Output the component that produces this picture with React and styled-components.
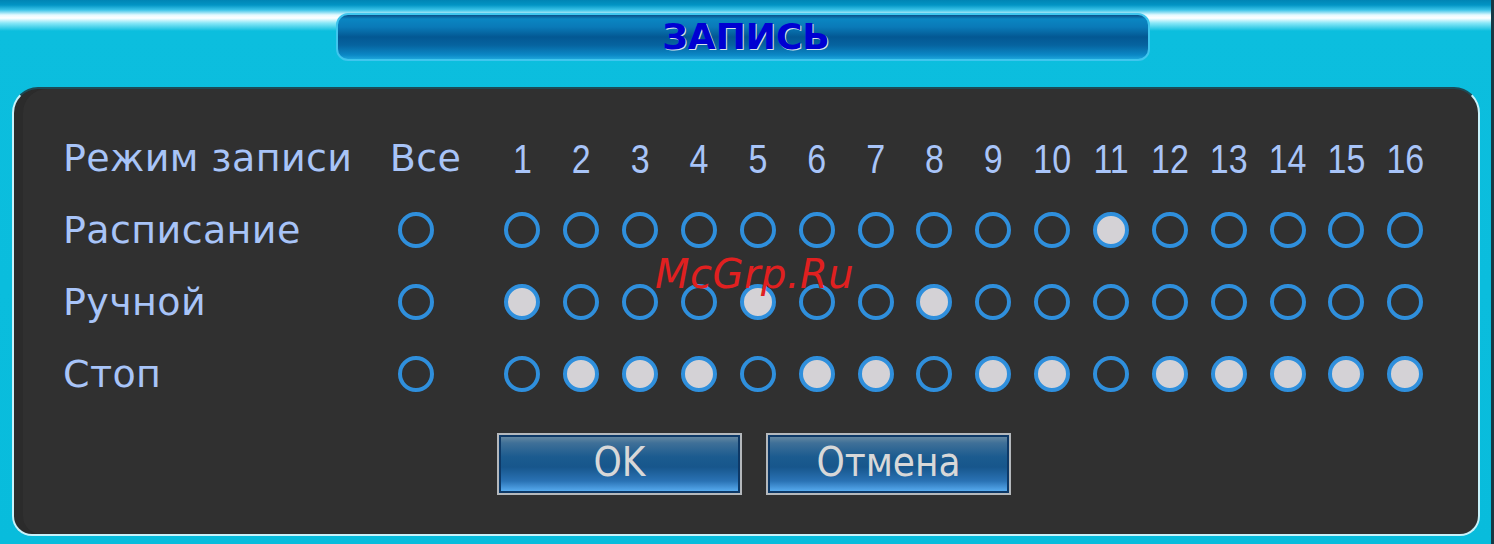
import styled, { createGlobalStyle } from "styled-components";

const Global = createGlobalStyle`
  html, body {
    margin: 0;
    padding: 0;
    background: #08bcdc;
  }
  * { box-sizing: border-box; }
`;

const Frame = styled.div`
  position: relative;
  width: 1494px;
  height: 544px;
  overflow: hidden;
  padding-top: 13px;
  background: linear-gradient(
    180deg,
    #0084b4 0px,
    #0294c4 5px,
    #3cc4e8 10px,
    #e4faff 15px,
    #ffffff 18px,
    #8ae8f8 23px,
    #0cbede 31px,
    #08bcdc 100%
  );
  box-shadow: inset -3px 0 0 #173844;
`;

const TitleBar = styled.div`
  width: 814px;
  height: 48px;
  margin-left: 336px;
  border-radius: 12px;
  border: 2px solid #3fc6ee;
  background: linear-gradient(
    180deg,
    #0b4f88 0px,
    #0a86c2 4px,
    #0a7ab8 12px,
    #035893 22px,
    #06639f 30px,
    #0b88c6 40px,
    #1ca4da 100%
  );
  display: flex;
  align-items: center;
  justify-content: center;
`;

const Title = styled.span`
  font-family: "DejaVu Sans", "Liberation Sans", sans-serif;
  font-weight: bold;
  font-size: 36px;
  color: #0000d2;
  text-shadow: 1px 1px 0 #d8e4ec;
  margin-top: -2px;
  padding-left: 6px;
`;

const Panel = styled.div`
  margin: 26px 0 0 12px;
  width: 1468px;
  height: 449px;
  background: #303030;
  border-radius: 26px 26px 20px 20px;
  border: 2px solid #c8f2fa;
  border-top: 2px solid #1d4a55;
  box-shadow: inset 9px 0 0 #2b2b2b;
  padding: 33px 0 0 49px;
`;

const Grid = styled.div`
  display: grid;
  grid-template-columns: 323px 59px 48px repeat(16, 58.87px);
  grid-auto-rows: 72px;
  align-items: center;
`;

const Label = styled.div`
  font-family: "DejaVu Sans", "Liberation Sans", sans-serif;
  font-size: 38px;
  color: #a8c4f8;
  white-space: nowrap;
  letter-spacing: 0.4px;
  grid-column: ${(p) => p.$col || "auto"};
  justify-self: ${(p) => (p.$center ? "center" : "start")};
  margin-left: ${(p) => p.$shift || 0}px;
`;

const Num = styled.div`
  font-family: "Liberation Sans", sans-serif;
  font-size: 34px;
  color: #a8c4f8;
  justify-self: center;
  transform: scaleY(1.22);
`;

const Radio = styled.div`
  width: 36px;
  height: 36px;
  border-radius: 50%;
  border: 4px solid #2f8fdc;
  background: ${(p) => (p.$on ? "#d4d2d6" : "transparent")};
  justify-self: center;
  grid-column: ${(p) => p.$col || "auto"};
`;

const Buttons = styled.div`
  display: flex;
  gap: 24px;
  margin: 23px 0 0 434px;
`;

const Button = styled.div`
  width: 245px;
  height: 62px;
  border: 2px solid #b4b8bc;
  box-shadow: inset 0 0 0 2px #0d3866;
  background: linear-gradient(
    180deg,
    #6f8ea4 0px,
    #3f7098 8px,
    #1b5b8f 22px,
    #17568c 32px,
    #2a72b4 46px,
    #56aaee 56px,
    #0d3866 100%
  );
  display: flex;
  align-items: center;
  justify-content: center;
  font-family: "DejaVu Sans Condensed", "DejaVu Sans", sans-serif;
  font-size: 40px;
  color: #d8d8d8;
  padding-bottom: 4px;
`;

const Watermark = styled.div`
  position: absolute;
  left: 655px;
  top: 251px;
  font-family: "DejaVu Sans", sans-serif;
  font-style: italic;
  font-size: 40px;
  color: #e02020;
  letter-spacing: 0.5px;
`;

const rows = [
  { name: "Расписание", on: [11] },
  { name: "Ручной", on: [1, 5, 8] },
  { name: "Стоп", on: [2, 3, 4, 6, 7, 9, 10, 12, 13, 14, 15, 16] },
];

const channels = Array.from({ length: 16 }, (_, i) => i + 1);

export default function App() {
  return (
    <>
      <Global />
      <Frame>
        <TitleBar>
          <Title>ЗАПИСЬ</Title>
        </TitleBar>
        <Panel>
          <Grid>
            <Label>Режим записи</Label>
            <Label $center $shift={20}>Все</Label>
            {channels.map((n, i) => (
              <Num key={n} style={i === 0 ? { gridColumn: 4 } : undefined}>
                {n}
              </Num>
            ))}
            {rows.map((r) => [
              <Label key={r.name} $col={1}>{r.name}</Label>,
              <Radio key={r.name + "-all"} $col={2} />,
              ...channels.map((n) => (
                <Radio key={r.name + n} $col={n + 3} $on={r.on.includes(n)} />
              )),
            ])}
          </Grid>
          <Buttons>
            <Button>OK</Button>
            <Button>Отмена</Button>
          </Buttons>
        </Panel>
        <Watermark>McGrp.Ru</Watermark>
      </Frame>
    </>
  );
}
